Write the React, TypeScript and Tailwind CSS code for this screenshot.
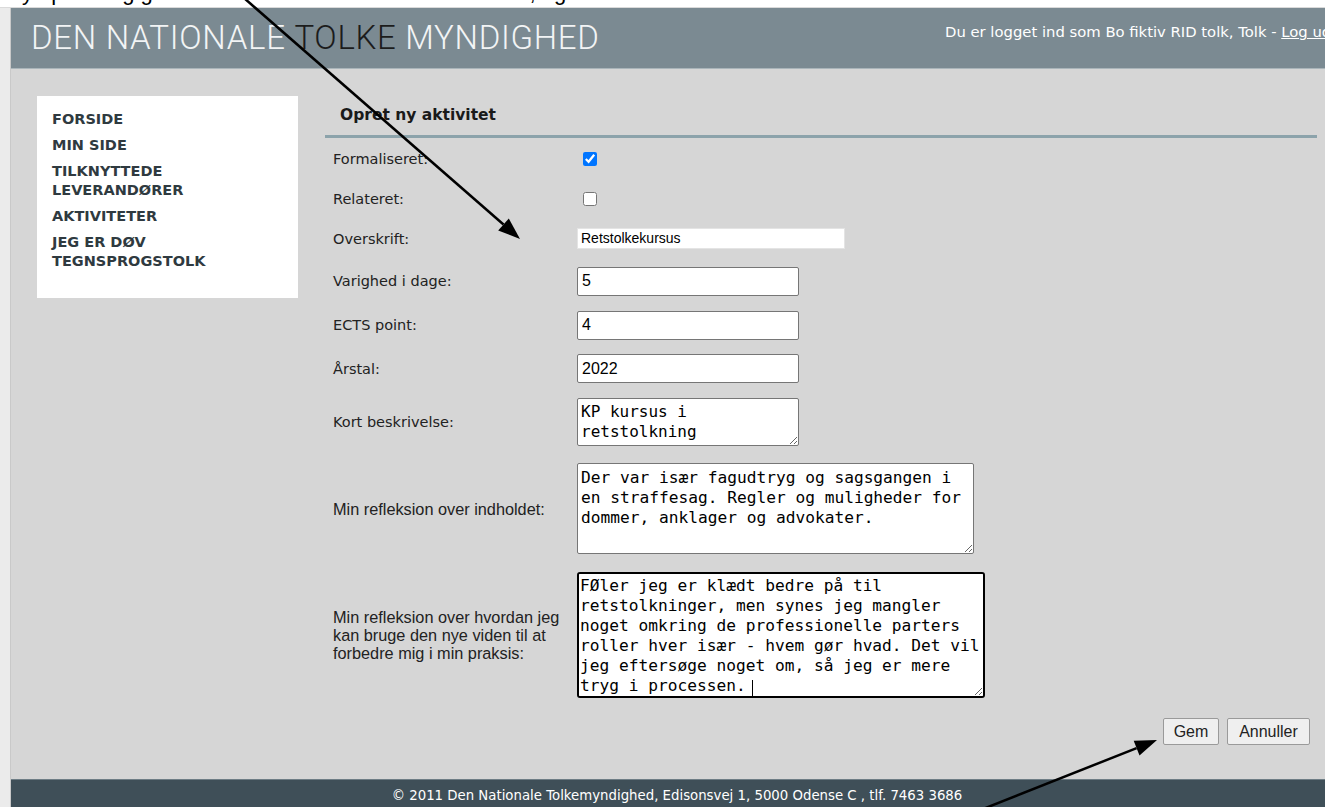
import React from 'react';

const menuItems: string[][] = [
  ['FORSIDE'],
  ['MIN SIDE'],
  ['TILKNYTTEDE', 'LEVERANDØRER'],
  ['AKTIVITETER'],
  ['JEG ER DØV', 'TEGNSPROGSTOLK'],
];

interface FieldRowProps {
  label: React.ReactNode;
  height: string;
  narrow?: boolean;
  children: React.ReactNode;
}

function FieldRow({ label, height, narrow, children }: FieldRowProps) {
  return (
    <div className={`flex items-center ${height}`}>
      <div
        className={
          narrow
            ? "w-[244px] shrink-0 font-['Liberation_Sans',Arial,sans-serif] text-[16.3px] leading-[18px] text-[#222]"
            : "w-[244px] shrink-0 font-['DejaVu_Sans',Tahoma,sans-serif] text-[14.5px] leading-[18px] text-[#222]"
        }
      >
        {label}
      </div>
      <div className="flex items-center">{children}</div>
    </div>
  );
}

function TextInput({ value }: { value: string }) {
  return (
    <input
      type="text"
      defaultValue={value}
      className="h-[29px] w-[222px] rounded-[2px] border border-[#767676] bg-white px-[4px] font-['Liberation_Sans',Arial,sans-serif] text-[16px] text-black outline-none"
    />
  );
}

function Arrow({ x1, y1, tip, base, left, right }: { x1: number; y1: number; tip: string; base: [number, number]; left: string; right: string }) {
  return (
    <g>
      <line x1={x1} y1={y1} x2={base[0]} y2={base[1]} stroke="#000" strokeWidth={2.5} />
      <polygon points={`${tip} ${left} ${right}`} fill="#000" />
    </g>
  );
}

export default function App() {
  return (
    <div className="relative flex h-[807px] w-[1325px] flex-col overflow-hidden bg-[#ebebeb]">
      {/* clipped line of text above the page */}
      <div className="h-[8px] shrink-0 overflow-hidden border-b border-[#dadada] bg-white">
        <div className="mt-[-20px] whitespace-nowrap pl-[6px] font-['Liberation_Sans',Arial,sans-serif] text-[22px] leading-[26px] text-black">
          Ny opløsning gemt<span className="ml-[340px]">, og</span>
        </div>
      </div>

      <div className="ml-[10px] flex flex-1 flex-col border-l border-[#c9c9c9]">
        {/* header */}
        <div className="flex h-[61px] shrink-0 overflow-hidden border-b border-[#aab5ba] bg-[#7b8a92]">
          <div className="flex w-[934px] shrink-0 items-center whitespace-pre pl-[20px] font-['Roboto','Liberation_Sans',sans-serif] text-[33px] font-light tracking-[0.7px] text-[#f2f4f5]">
            DEN NATIONALE <span className="text-[#1c1c1c]">TOLKE</span> MYNDIGHED
          </div>
          <div className="shrink-0 whitespace-nowrap pt-[15px] font-['DejaVu_Sans',Tahoma,sans-serif] text-[14.8px] leading-[18px] text-white">
            Du er logget ind som Bo fiktiv RID tolk, Tolk - <span className="underline">Log ud</span>
          </div>
        </div>

        {/* body */}
        <div className="flex flex-1 bg-[#d6d6d6] pt-[27px]">
          <div className="ml-[26px] h-[202px] w-[261px] shrink-0 bg-white pl-[15px] pt-[14px]">
            <div className="flex flex-col gap-[7px]">
              {menuItems.map((lines) => (
                <div
                  key={lines.join(' ')}
                  className="font-['DejaVu_Sans',Verdana,sans-serif] text-[14.5px] font-bold leading-[19px] text-[#2f3a40]"
                >
                  {lines.map((l) => (
                    <div key={l}>{l}</div>
                  ))}
                </div>
              ))}
            </div>
          </div>

          <div className="ml-[27px] mr-[8px] flex-1">
            <div className="flex h-[42px] items-center border-b-[3px] border-[#8ca3ab] pl-[15px] font-['DejaVu_Sans',Verdana,sans-serif] text-[15.5px] font-bold text-[#1a1a1a]">
              Opret ny aktivitet
            </div>

            <div className="pl-[8px]">
              <FieldRow label="Formaliseret:" height="h-[41px]">
                <input type="checkbox" defaultChecked className="ml-[6px] h-[14px] w-[14px] accent-[#0075ff]" />
              </FieldRow>
              <FieldRow label="Relateret:" height="h-[39px]">
                <input type="checkbox" className="ml-[6px] h-[14px] w-[14px] accent-[#0075ff]" />
              </FieldRow>
              <FieldRow label="Overskrift:" height="h-[41px]">
                <input
                  type="text"
                  defaultValue="Retstolkekursus"
                  className="h-[21px] w-[268px] border border-[#e4e4e4] bg-white px-[3px] font-['Liberation_Sans',Arial,sans-serif] text-[14px] text-black outline-none"
                />
              </FieldRow>
              <FieldRow label="Varighed i dage:" height="h-[44px]">
                <TextInput value="5" />
              </FieldRow>
              <FieldRow label="ECTS point:" height="h-[44px]">
                <TextInput value="4" />
              </FieldRow>
              <FieldRow label="Årstal:" height="h-[43px]">
                <TextInput value="2022" />
              </FieldRow>
              <FieldRow label="Kort beskrivelse:" height="h-[64px]">
                <textarea
                  defaultValue={'KP kursus i\nretstolkning'}
                  className="h-[48px] w-[222px] rounded-[2px] border border-[#767676] bg-white px-[3px] py-[3px] font-['DejaVu_Sans_Mono',monospace] text-[16px] leading-[20px] text-black outline-none"
                />
              </FieldRow>
              <FieldRow label="Min refleksion over indholdet:" height="h-[109px]" narrow>
                <textarea
                  defaultValue={'Der var især fagudtryg og sagsgangen i\nen straffesag. Regler og muligheder for\ndommer, anklager og advokater.'}
                  className="h-[91px] w-[397px] rounded-[2px] border border-[#767676] bg-white px-[3px] py-[4px] font-['DejaVu_Sans_Mono',monospace] text-[16.2px] leading-[20px] text-black outline-none"
                />
              </FieldRow>
              <FieldRow
                label={
                  <>
                    Min refleksion over hvordan jeg
                    <br />
                    kan bruge den nye viden til at
                    <br />
                    forbedre mig i min praksis:
                  </>
                }
                height="h-[144px]"
                narrow
              >
                <div className="relative">
                  <textarea
                    defaultValue={
                      'FØler jeg er klædt bedre på til\nretstolkninger, men synes jeg mangler\nnoget omkring de professionelle parters\nroller hver især - hvem gør hvad. Det vil\njeg eftersøge noget om, så jeg er mere\ntryg i processen. '
                    }
                    className="block h-[126px] w-[408px] rounded-[3px] border-2 border-black bg-white px-[1px] py-[2px] font-['DejaVu_Sans_Mono',monospace] text-[16.2px] leading-[20px] text-black outline-none"
                  />
                  <div className="absolute left-[175px] top-[108px] h-[16px] w-px bg-black" />
                </div>
              </FieldRow>

              <div className="mt-[11px] flex justify-end gap-[8px] pr-[7px]">
                <button className="h-[27px] w-[56px] rounded-[2px] border border-[#9a9a9a] bg-[#efefef] font-['Liberation_Sans',Arial,sans-serif] text-[16px] text-[#222]">
                  Gem
                </button>
                <button className="h-[27px] w-[83px] rounded-[2px] border border-[#9a9a9a] bg-[#efefef] font-['Liberation_Sans',Arial,sans-serif] text-[16px] text-[#222]">
                  Annuller
                </button>
              </div>
            </div>
          </div>
        </div>

        {/* footer */}
        <div className="h-[28px] shrink-0 border-t border-[#6e7d85] bg-[#3f4f58] pl-[18px] pt-[8px] text-center font-['DejaVu_Sans',Tahoma,sans-serif] text-[13.3px] leading-[16px] text-white">
          © 2011 Den Nationale Tolkemyndighed, Edisonsvej 1, 5000 Odense C , tlf. 7463 3686
        </div>
      </div>

      {/* pointer arrows drawn on top */}
      <svg className="pointer-events-none absolute inset-0" width={1325} height={807} viewBox="0 0 1325 807">
        <Arrow x1={244} y1={-2} base={[503.5, 224.5]} tip="520,239" left="498.2,230.5" right="508.8,218.5" />
        <Arrow x1={983} y1={809} base={[1136.6, 748.1]} tip="1157,740" left="1139.5,755.5" right="1133.7,740.7" />
      </svg>
    </div>
  );
}
